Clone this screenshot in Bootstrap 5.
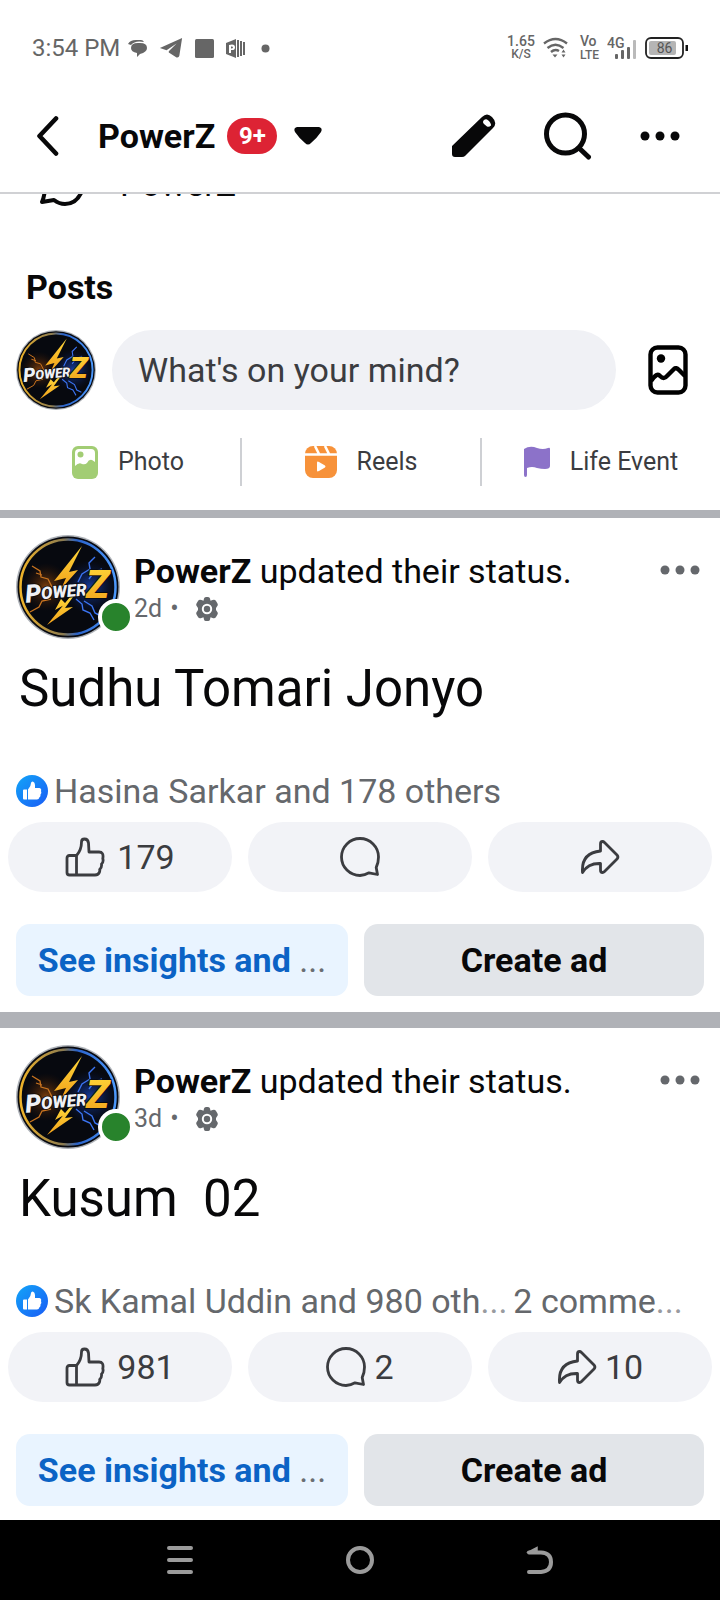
<!DOCTYPE html>
<html lang="en">
<head>
<meta charset="utf-8">
<meta name="viewport" content="width=device-width, initial-scale=1">
<title>PowerZ</title>
<link href="https://cdn.jsdelivr.net/npm/bootstrap@5.3.0/dist/css/bootstrap.min.css" rel="stylesheet">
<style>
  body { font-family: Roboto, "Liberation Sans", sans-serif; color: #080809; background: #fff; }
  svg { display: block; flex-shrink: 0; }
  .btn { color: #080809; }
  .status-bar { height: 96px; padding: 0 32px; color: #666; font-size: 24px; line-height: 28px; }
  .status-stack { font-size: 14px; line-height: 13px; font-weight: 500; }
  .status-stack .tiny { font-size: 12px; }
  .app-bar { height: 98px; padding: 0 40px 16px 36px; border-bottom: 2px solid #d0d1d4; }
  .app-title { padding-left: 38px; }
  .t-main { font-size: 34px; line-height: 40px; }
  .t-meta { font-size: 25px; line-height: 36px; }
  .count-pill { background: #dd2334; color: #fff; font-size: 24px; line-height: 36px; width: 50px; font-weight: 700; margin: 0 16px 0 12px; }
  .peek-row { height: 60px; margin: -40px 0 6px; padding: 0 40px; gap: 34px; }
  .section-title { padding: 47px 26px 0; }
  .composer { padding: 23px 16px 0; }
  .composer-box { height: 80px; padding: 0 26px; background: #f0f1f5; border: 0; border-radius: 40px; min-width: 0; }
  .composer-box::placeholder { color: #3b3c40; opacity: 1; }
  .quick { height: 48px; color: #3b3c40; gap: 20px; flex: 1 1 33%; }
  .quick + .quick { border-left: 2px solid #ced0d4; }
  .band { background: #b0b2b7; }
  .band-sm { height: 8px; }
  .band-lg { height: 16px; }
  .presence { position: absolute; right: -14px; bottom: 4px; width: 36px; height: 36px; border: 4px solid #fff; border-radius: 50%; background: #28832c; }
  .byline { margin-left: 14px; }
  .muted, .btn.muted { color: #65686c; }
  .more-btn { margin-top: 25px; }
  .post-head { padding: 17px 16px 0; }
  .reactions { gap: 6px; padding: 0 16px; }
  .soft-dots { color: #999b9f; font-weight: 400; }
  .act .soft-dots { color: #6b6e73; }
  .headline { font-size: 51px; line-height: 60px; padding: 0 19px; margin: 20px 0 52px; white-space: pre-wrap; }
  .pills { padding: 11px 8px 0; }
  .pill { height: 70px; background: #f2f3f7; color: #3b3c40; border-radius: 36px; }
  .act { height: 72px; border-radius: 14px; font-weight: 700; min-width: 0; }
  .act-blue { background: #e9f4ff; color: #0b63c5; flex: 83 1 0; }
  .act-grey { background: #e2e5e9; color: #080809; flex: 85 1 0; }
  .nav-keys { height: 80px; background: #000; }
</style>
</head>
<body class="vh-100 d-flex flex-column overflow-hidden">

<svg width="0" height="0" class="position-absolute" aria-hidden="true">
  <defs>
    <linearGradient id="ring" x1="0" y1="0" x2="1" y2="0"><stop offset="0" stop-color="#f0b429"/><stop offset=".45" stop-color="#8a7a50"/><stop offset=".6" stop-color="#2a62c9"/><stop offset="1" stop-color="#4d9bff"/></linearGradient>
    <linearGradient id="gold" x1="0" y1="0" x2="0" y2="1"><stop offset="0" stop-color="#ffd83a"/><stop offset="1" stop-color="#f2a01a"/></linearGradient>
    <linearGradient id="likeBlue" x1="0" y1="0" x2="1" y2="1"><stop offset="0" stop-color="#12a5f8"/><stop offset="1" stop-color="#1a5cf5"/></linearGradient>
    <radialGradient id="glowB"><stop offset="0" stop-color="#1c4fd0" stop-opacity=".75"/><stop offset="1" stop-color="#0a1a50" stop-opacity="0"/></radialGradient>
    <radialGradient id="glowO"><stop offset="0" stop-color="#b0560c" stop-opacity=".7"/><stop offset="1" stop-color="#401c04" stop-opacity="0"/></radialGradient>
    <symbol id="avatar" viewBox="0 0 104 104">
      <circle cx="52" cy="52" r="52" fill="#aeb2b8"/>
      <circle cx="52" cy="52" r="50.500" fill="#07090f"/>
      <circle cx="52" cy="52" r="47.500" fill="none" stroke="url(#ring)" stroke-width="2.500"/>
      <circle cx="74" cy="52" r="27" fill="url(#glowB)"/>
      <circle cx="30" cy="52" r="24" fill="url(#glowO)"/>
      <path d="M16 31l8 5 1 6 7 2 4 8M14 77l9-5 3-6 9-2M20 38l6 2" fill="none" stroke="#c8731f" stroke-width="1.300"/>
      <path d="M79 22l-6 6 1 6-8 5-4 8M86 34l-8 3-5 7M60 64l6 5 1 6 7 3 4 7M68 66l8 5 3 7 6 3" fill="none" stroke="#3b74f2" stroke-width="1.400"/>
      <path d="M66 11L38 46L50 43L45 54L62 35L53 37Z" fill="url(#gold)"/>
      <path d="M54 62L31 90L57 72L49 73L57 62Z M45 64L39 75L50 69Z" fill="url(#gold)"/>
      <g transform="rotate(-5 52 54)" font-family="Roboto, sans-serif" font-weight="900" font-style="italic" fill="#f0f1f5" stroke="#07090f" stroke-width="1.600" paint-order="stroke">
        <text x="9" y="64" font-size="25">P<tspan font-size="17" dy="-2">OWER</tspan></text>
      </g>
      <text x="70" y="63" font-family="Roboto, sans-serif" font-weight="900" font-style="italic" font-size="39" fill="url(#gold)" stroke="#07090f" stroke-width="1.600" paint-order="stroke">Z</text>
    </symbol>
    <symbol id="thumb" viewBox="0 0 40 40"><path d="M11.500 18.500H4.500Q2 18.500 2 21V35.500Q2 38 4.500 38H30Q33.500 38 34.500 35Q35 33.500 34.700 32.500Q37 31 36.500 27Q38.800 25 37.800 21.500Q39 15 34 15H24L23.500 6Q23 2 19.500 2Q16.500 2 16.500 5Q16.500 13 11.500 18.500ZM11.500 18.500V38" fill="none" stroke="currentColor" stroke-width="2.800" stroke-linejoin="round"/></symbol>
    <symbol id="bubble" viewBox="0 0 40 40"><path d="M20 1.500A18.500 18.500 0 1 0 20 38.500Q25 38 29 35.800L37.500 37.500L36.200 30.500Q38.500 26 38.500 20A18.500 18.500 0 0 0 20 1.500Z" fill="none" stroke="currentColor" stroke-width="2.800" stroke-linejoin="round"/></symbol>
    <symbol id="share" viewBox="0 0 40 40"><path d="M20.500 14V7Q20.500 4.500 22.500 4.500Q23.500 4.500 24.500 5.500L37 18Q38.800 20 37 22L24.500 34.500Q23.500 35.500 22.500 35.500Q20.500 35.500 20.500 33V26.500Q8 26 2.500 35.500Q1 16 20.500 14Z" fill="none" stroke="currentColor" stroke-width="2.800" stroke-linejoin="round"/></symbol>
    <symbol id="like" viewBox="0 0 32 32"><circle cx="16" cy="16" r="16" fill="url(#likeBlue)"/><path d="M7 15.500Q7 14.500 8 14.500H11V24.500H8Q7 24.500 7 23.500ZM12 14.500Q15 11.500 15 8Q15 6.500 16.800 6.500Q19 7 19 10V13H23.500Q25.800 13.500 25 16Q26 18 24.500 19.500Q25 21.500 23.300 22.500Q23 24.500 21 24.500H12Z" fill="#fff"/></symbol>
    <symbol id="gear" viewBox="0 0 24 24"><path fill-rule="evenodd" fill="currentColor" d="M9 1.500Q9.300 0 11 0H13Q14.700 0 15 1.500L15.500 3.700L17.600 3Q20 2.300 21 4L22.500 6.500Q23.500 8.200 22 9.500L21 11V13L22 14.500Q23.500 15.800 22.500 17.500L21 20Q20 21.700 17.600 21L15.500 20.300L15 22.500Q14.700 24 13 24H11Q9.300 24 9 22.500L8.500 20.300L6.400 21Q4 21.700 3 20L1.500 17.500Q.5 15.800 2 14.500L3 13V11L2 9.500Q.5 8.200 1.500 6.500L3 4Q4 2.300 6.400 3L8.500 3.700ZM12 6.800A5.200 5.200 0 1 0 12 17.200A5.200 5.200 0 1 0 12 6.800Z"/><circle cx="12" cy="12" r="3.200" fill="currentColor"/></symbol>
    <symbol id="dots" viewBox="0 0 40 10"><g fill="currentColor"><circle cx="5" cy="5" r="4.500"/><circle cx="20" cy="5" r="4.500"/><circle cx="35" cy="5" r="4.500"/></g></symbol>
  </defs>
</svg>

<div class="status-bar d-flex align-items-center flex-shrink-0">
  <span>3:54 PM</span>
  <div class="d-flex align-items-center ms-2">
    <svg width="19" height="19" viewBox="0 0 19 19" fill="currentColor"><path d="M0 5Q2 1 8 1H13Q15 1 16 3Q7 1 3 6Z"/><path d="M3 9Q3 4 10 4H12Q19 4 19 9Q19 13 12 15L9 18V14Q3 13 3 9Z"/></svg>
    <svg class="ms-2" width="32" height="20" viewBox="-4 0 28 18" fill="currentColor"><path d="M20 0L0 9L6 11L15 5L8 12V13L15 17.500Q17 18 17.500 16Z"/></svg>
    <svg class="ms-2" width="19" height="19" viewBox="0 0 19 19"><rect width="19" height="19" rx="1.500" fill="currentColor"/></svg>
    <svg class="ms-2 ps-1" width="23" height="19" viewBox="0 0 19 19" fill="currentColor"><path fill-rule="evenodd" d="M0 4L10 0V19L0 15ZM3 6V14H5V11Q9 11.500 9 8.500Q9 5.500 6 5.500ZM5 7.500Q7 7 7 8.500Q7 9.500 5 9.500Z"/><path d="M11 1h2v17h-2zM14 2h2v15h-2zM17 3h2v13h-2z"/></svg>
    <svg class="ms-3" width="9" height="9" viewBox="0 0 9 9"><circle cx="4.500" cy="4.500" r="4" fill="currentColor"/></svg>
  </div>
  <div class="d-flex align-items-center ms-auto gap-2">
    <div class="status-stack text-center"><div>1.65</div><div class="tiny">K/S</div></div>
    <svg width="25" height="22" viewBox="0 0 25 22" fill="none" stroke="currentColor" stroke-width="2.400"><path d="M1 6.500Q12.500-2.500 24 6.500M4.500 11Q12.500 4.500 20.500 11M8 15Q12 11.500 16 14"/><path d="M9.500 17.500H14.500L12 20.500ZM18.500 15.500L20.500 12.500L22.500 15.500ZM18.500 17.500L20.500 20.500L22.500 17.500Z" fill="currentColor" stroke="none"/></svg>
    <div class="status-stack ms-1">Vo<br><span class="tiny">LTE</span></div>
    <svg width="30" height="24" viewBox="0 0 30 24" fill="currentColor"><text x="0" y="12" font-size="14" font-weight="500">4G</text><rect x="8" y="18" width="3" height="5" rx="1"/><rect x="14" y="14" width="3" height="9" rx="1"/><rect x="20" y="11" width="3" height="12" rx="1"/><rect x="26" y="4" width="3" height="19" rx="1" opacity=".45"/></svg>
    <svg width="43" height="24" viewBox="0 0 43 24"><rect x="1" y="2" width="37" height="20" rx="5" fill="#fff" stroke="#222" stroke-width="1.800"/><rect x="4" y="5" width="27" height="14" rx="2" fill="#b5b5b5"/><rect x="40.500" y="9" width="2.500" height="6" fill="#111"/><text x="19.500" y="17" text-anchor="middle" font-size="14" fill="#555">86</text></svg>
  </div>
</div>

<header class="app-bar d-flex align-items-center flex-shrink-0">
  <button class="btn p-0 border-0" aria-label="Back"><svg width="24" height="40" viewBox="0 0 24 40"><path d="M20 2.500L3.500 20L20 37.500" fill="none" stroke="#080809" stroke-width="4.600" stroke-linecap="round" stroke-linejoin="round"/></svg></button>
  <button class="app-title btn py-0 pe-0 border-0 d-flex align-items-center flex-grow-1" aria-label="Switch page">
    <span class="t-main fw-bold">PowerZ</span>
    <span class="count-pill rounded-pill">9+</span>
    <svg width="30" height="20" viewBox="0 0 30 20"><path d="M4 1H26Q30 2 28 6Q24 12 18 17Q15 20 12 17Q6 12 2 6Q0 2 4 1Z" fill="#080809"/></svg>
  </button>
  <div class="d-flex align-items-center gap-5">
    <button class="btn p-0 border-0" aria-label="Edit"><svg width="44" height="46" viewBox="0 0 44 46"><path fill-rule="evenodd" fill="#080809" d="M0 33L30 4Q35-1 40 4Q46 10 41 15L13 43Q12 44 10 44H3Q0 44 0 41ZM32 7Q30 9 32 11L35 13.500Q37 14.500 39 12.500Q39.500 11 37 8L35 6.500Q33.500 6 32 7Z"/></svg></button>
    <button class="btn p-0 border-0" aria-label="Search"><svg width="48" height="48" viewBox="0 0 48 48" fill="none" stroke="#080809" stroke-width="5"><circle cx="21.500" cy="22" r="19"/><path d="M35 36L44.500 45" stroke-linecap="round"/></svg></button>
    <button class="btn p-0 border-0" aria-label="More"><svg width="40" height="10"><use href="#dots"/></svg></button>
  </div>
</header>

<main class="flex-grow-1 overflow-hidden">
  <div class="peek-row d-flex align-items-center">
    <svg width="46" height="56" viewBox="0 0 46 56"><path d="M7 32A20 20 0 1 1 43 32Q38 48 25 48Q19 48 14 44L2 46Q5 39 5 30" fill="none" stroke="#080809" stroke-width="4" stroke-linejoin="round"/></svg>
    <span class="t-main">PowerZ</span>
  </div>

  <section>
    <h2 class="section-title t-main fw-bold mb-0">Posts</h2>
    <div class="composer d-flex align-items-center gap-3">
      <svg width="80" height="80"><use href="#avatar"/></svg>
      <input class="composer-box t-main flex-grow-1" type="text" placeholder="What's on your mind?" aria-label="What's on your mind?">
      <button class="btn border-0 py-0 px-3" aria-label="Add photo"><svg width="40" height="50" viewBox="0 0 40 50" fill="none" stroke="#000" stroke-width="4.400"><rect x="2.500" y="2.500" width="35" height="45" rx="7"/><circle cx="13" cy="13.500" r="4.200" fill="#000" stroke="none"/><path d="M3 36Q9 27 12 31Q16 35 19 31L26 24Q28 22 31 25L37 31" stroke-linejoin="round"/></svg></button>
    </div>
    <div class="d-flex py-4 mt-1">
      <button class="quick t-meta btn rounded-0 border-0 py-0 ps-3 pe-0 d-flex align-items-center justify-content-center"><svg width="26" height="33" viewBox="0 0 26 33"><rect width="26" height="33" rx="6" fill="#a2cd74"/><path d="M3 7Q3 3 7 3H19Q23 3 23 7V16L20 14Q17 13 15 17Q13 19 10 18Q7 16 3 20Z" fill="#fff"/><circle cx="8.500" cy="8.500" r="3" fill="#a2cd74"/></svg>Photo</button>
      <button class="quick t-meta btn rounded-0 border-top-0 border-bottom-0 border-end-0 p-0 d-flex align-items-center justify-content-center"><svg width="32" height="32" viewBox="0 0 32 32"><rect width="32" height="32" rx="8" fill="#f7923a"/><path d="M0 8.500H32M10 0L14 8M20 0L24 8" stroke="#fff" stroke-width="2.600"/><path d="M12 16.500Q12 15 14 16L20 19.500Q21 20.500 20 21.500L14 25Q12 26 12 24.500Z" fill="#fff"/></svg>Reels</button>
      <button class="quick t-meta btn rounded-0 border-top-0 border-bottom-0 border-end-0 p-0 d-flex align-items-center justify-content-center"><svg width="26" height="32" viewBox="0 0 26 32"><path d="M0 3Q6-1 13 2Q19 4 24 2Q26 1 26 3V20Q26 23 21 23Q17 23 13 22Q8 20 3 22V29Q3 31 1.500 31Q0 31 0 29Z" fill="#8c72c9"/></svg>Life Event</button>
    </div>
  </section>
  <div class="band band-sm"></div>

  <article>
    <div class="post-head d-flex">
      <div class="position-relative"><svg width="104" height="104"><use href="#avatar"/></svg><span class="presence"></span></div>
      <div class="byline pt-3 flex-grow-1">
        <div class="t-main"><b>PowerZ</b> updated their status.</div>
        <div class="t-meta muted d-flex align-items-center">2d<span class="ms-2 me-3">•</span><svg width="24" height="24"><use href="#gear"/></svg></div>
      </div>
      <button class="more-btn btn muted border-0 p-0 me-1 align-self-start" aria-label="Post options"><svg width="40" height="20" viewBox="0 -5 40 20"><use href="#dots" width="40" height="10"/></svg></button>
    </div>
    <p class="headline">Sudhu Tomari Jonyo</p>
    <div class="reactions t-main muted d-flex align-items-center"><svg width="32" height="32"><use href="#like"/></svg><span>Hasina Sarkar and 178 others</span></div>
    <div class="pills d-flex gap-3">
      <button class="pill t-main btn border-0 p-0 w-100 d-flex align-items-center justify-content-center gap-2" aria-label="Like"><svg class="me-1" width="40" height="40"><use href="#thumb"/></svg><span>179</span></button>
      <button class="pill t-main btn border-0 p-0 w-100 d-flex align-items-center justify-content-center gap-2" aria-label="Comment"><svg width="40" height="40"><use href="#bubble"/></svg></button>
      <button class="pill t-main btn border-0 p-0 w-100 d-flex align-items-center justify-content-center gap-2" aria-label="Share"><svg width="40" height="40"><use href="#share"/></svg></button>
    </div>
    <div class="d-flex gap-3 p-3 mt-3">
      <button class="act act-blue t-main btn border-0 p-0">See insights and <span class="soft-dots">...</span></button>
      <button class="act act-grey t-main btn border-0 p-0">Create ad</button>
    </div>
  </article>
  <div class="band band-lg"></div>

  <article>
    <div class="post-head d-flex">
      <div class="position-relative"><svg width="104" height="104"><use href="#avatar"/></svg><span class="presence"></span></div>
      <div class="byline pt-3 flex-grow-1">
        <div class="t-main"><b>PowerZ</b> updated their status.</div>
        <div class="t-meta muted d-flex align-items-center">3d<span class="ms-2 me-3">•</span><svg width="24" height="24"><use href="#gear"/></svg></div>
      </div>
      <button class="more-btn btn muted border-0 p-0 me-1 align-self-start" aria-label="Post options"><svg width="40" height="20" viewBox="0 -5 40 20"><use href="#dots" width="40" height="10"/></svg></button>
    </div>
    <p class="headline">Kusum  02</p>
    <div class="reactions t-main muted d-flex align-items-center"><svg width="32" height="32"><use href="#like"/></svg><span>Sk Kamal Uddin and 980 oth<span class="soft-dots">...</span></span><span>2 comme<span class="soft-dots">...</span></span></div>
    <div class="pills d-flex gap-3">
      <button class="pill t-main btn border-0 p-0 w-100 d-flex align-items-center justify-content-center gap-2" aria-label="Like"><svg class="me-1" width="40" height="40"><use href="#thumb"/></svg><span>981</span></button>
      <button class="pill t-main btn border-0 p-0 w-100 d-flex align-items-center justify-content-center gap-2" aria-label="Comment"><svg width="40" height="40"><use href="#bubble"/></svg><span>2</span></button>
      <button class="pill t-main btn border-0 p-0 w-100 d-flex align-items-center justify-content-center gap-2" aria-label="Share"><svg width="40" height="40"><use href="#share"/></svg><span>10</span></button>
    </div>
    <div class="d-flex gap-3 p-3 mt-3">
      <button class="act act-blue t-main btn border-0 p-0">See insights and <span class="soft-dots">...</span></button>
      <button class="act act-grey t-main btn border-0 p-0">Create ad</button>
    </div>
  </article>
</main>

<nav class="nav-keys d-flex align-items-center justify-content-center flex-shrink-0" aria-label="System">
  <div class="w-25 d-flex justify-content-center"><button class="btn p-0 border-0" aria-label="Recent apps"><svg width="28" height="28" viewBox="0 0 28 28" stroke="#9b9b9b" stroke-width="4" stroke-linecap="round"><path d="M3 2H25M3 14H25M3 26H25"/></svg></button></div>
  <div class="w-25 d-flex justify-content-center"><button class="btn p-0 border-0" aria-label="Home"><svg width="28" height="28" viewBox="0 0 28 28"><circle cx="14" cy="14" r="12" fill="none" stroke="#9b9b9b" stroke-width="4"/></svg></button></div>
  <div class="w-25 d-flex justify-content-center"><button class="btn p-0 border-0" aria-label="Back key"><svg width="28" height="28" viewBox="0 0 28 28" fill="none" stroke="#9b9b9b" stroke-width="4" stroke-linecap="round"><path d="M3 26H15Q25 25 25 16Q25 7 15 6.500H3"/><path d="M2.500 6L11 1.500V7Z" fill="#9b9b9b" stroke-width="1.500"/></svg></button></div>
</nav>

<script src="https://cdn.jsdelivr.net/npm/bootstrap@5.3.0/dist/js/bootstrap.bundle.min.js"></script>
</body>
</html>
